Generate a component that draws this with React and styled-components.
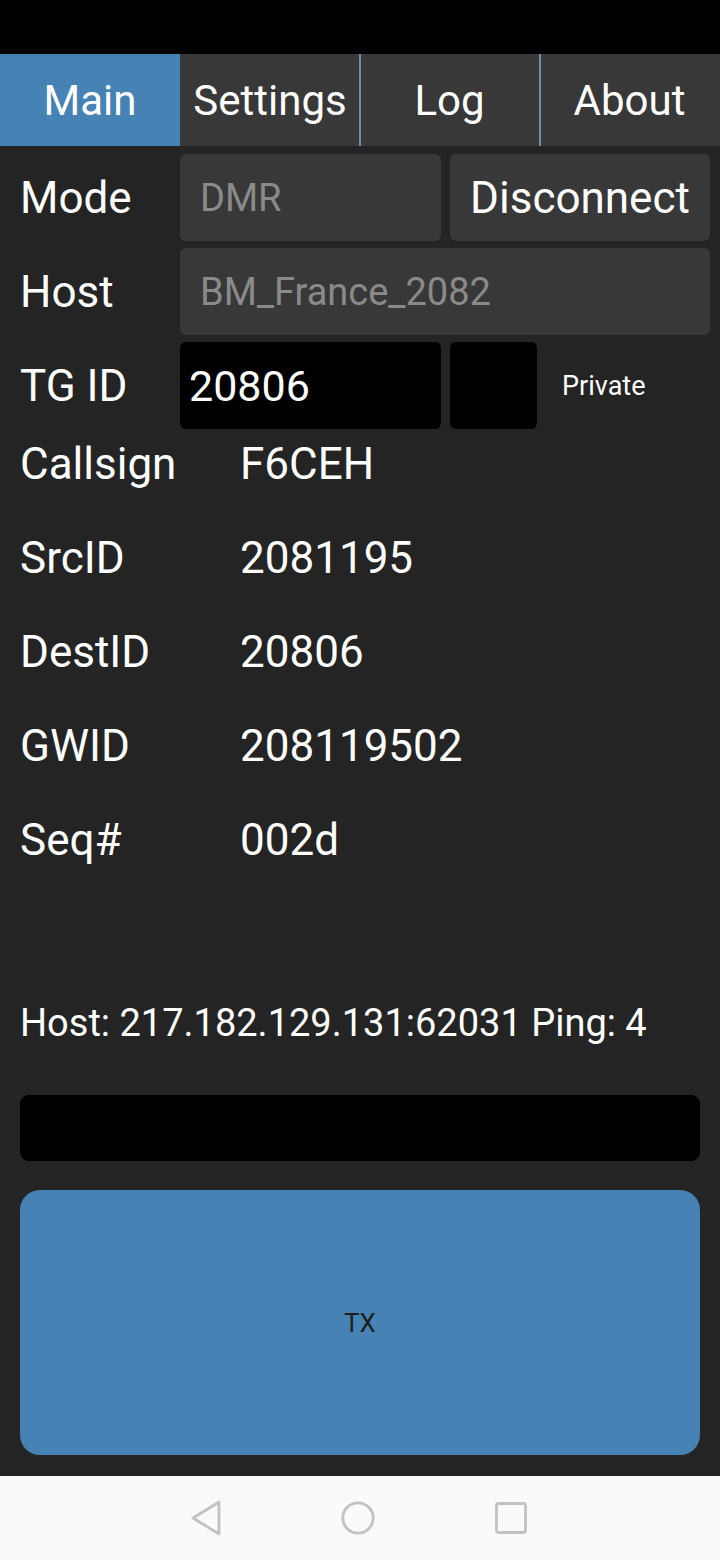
import React, {useState} from "react";
import styled, {createGlobalStyle} from "styled-components";

const GlobalStyle = createGlobalStyle`
  html, body {
    margin: 0;
    padding: 0;
    background: #242424;
  }
  * {
    box-sizing: border-box;
  }
  body {
    font-family: Roboto, "Noto Sans", "Liberation Sans", sans-serif;
    color: #ffffff;
  }
`;

const TABS = ["Main", "Settings", "Log", "About"];

const INFO = [
  {label: "Callsign", value: "F6CEH"},
  {label: "SrcID", value: "2081195"},
  {label: "DestID", value: "20806"},
  {label: "GWID", value: "208119502"},
  {label: "Seq#", value: "002d"},
];

const App = () => {
  const [tab, setTab] = useState("Main");

  return (
    <>
      <GlobalStyle />
      <Screen>
        <StatusBar />
        <TabBar>
          {TABS.map((t, i) => (
            <Tab key={t} $active={t === tab} $divider={i > 1} onClick={() => setTab(t)}>
              {t}
            </Tab>
          ))}
        </TabBar>

        <Content>
          <Form>
            <Label>Mode</Label>
            <Field>DMR</Field>
            <FlatButton>Disconnect</FlatButton>

            <Label>Host</Label>
            <Field $wide>BM_France_2082</Field>

            <Label>TG ID</Label>
            <Field $dark>20806</Field>
            <TgExtra>
              <CheckBox />
              <SmallText>Private</SmallText>
            </TgExtra>
          </Form>

          <InfoList>
            {INFO.map((row) => (
              <React.Fragment key={row.label}>
                <InfoLabel>{row.label}</InfoLabel>
                <Value>{row.value}</Value>
              </React.Fragment>
            ))}
          </InfoList>

          <HostLine>Host: 217.182.129.131:62031 Ping: 4</HostLine>

          <LevelBar />
          <TxButton>TX</TxButton>
        </Content>

        <NavBar>
          <svg width="34" height="38" viewBox="0 0 34 38">
            <path d="M30 3 L30 35 L4 19 Z" fill="none" stroke="#c2c2c2" strokeWidth="2.8" strokeLinejoin="round" />
          </svg>
          <svg width="38" height="38" viewBox="0 0 38 38">
            <circle cx="19" cy="19" r="15.2" fill="none" stroke="#c2c2c2" strokeWidth="2.8" />
          </svg>
          <svg width="36" height="36" viewBox="0 0 36 36">
            <rect x="3.5" y="3.5" width="29" height="29" rx="2" fill="none" stroke="#c2c2c2" strokeWidth="2.8" />
          </svg>
        </NavBar>
      </Screen>
    </>
  );
};

const Screen = styled.div`
  width: 720px;
  height: 1560px;
  display: flex;
  flex-direction: column;
  background: #242424;
  overflow: hidden;
`;

const StatusBar = styled.div`
  height: 54px;
  flex: none;
  background: #000000;
`;

const TabBar = styled.div`
  height: 92px;
  flex: none;
  display: grid;
  grid-template-columns: repeat(4, 1fr);
  background: #383838;
`;

const Tab = styled.div`
  display: flex;
  align-items: center;
  justify-content: center;
  font-size: 42px;
  color: #ffffff;
  background: ${(p) => (p.$active ? "#4682b4" : "#383838")};
  box-shadow: ${(p) => (p.$divider ? "inset 2px 0 0 #6b8fb5" : "none")};
  margin-left: ${(p) => (p.$divider ? "-1px" : "0")};
  cursor: pointer;
`;

const Content = styled.div`
  flex: 1;
  display: flex;
  flex-direction: column;
`;

const Form = styled.div`
  display: grid;
  grid-template-columns: 171px 261px 260px;
  grid-auto-rows: 87px;
  column-gap: 9px;
  row-gap: 7px;
  padding-top: 8px;
`;

const Label = styled.div`
  display: flex;
  align-items: center;
  padding-left: 20px;
  font-size: 44px;
  color: #ffffff;
`;

const Field = styled.div`
  grid-column: ${(p) => (p.$wide ? "2 / 4" : "auto")};
  display: flex;
  align-items: center;
  padding-left: ${(p) => (p.$dark ? "9px" : "20px")};
  border-radius: 6px;
  background: ${(p) => (p.$dark ? "#000000" : "#383838")};
  color: ${(p) => (p.$dark ? "#ffffff" : "#8a8a8a")};
  font-size: ${(p) => (p.$dark ? "43px" : "38px")};
`;

const FlatButton = styled.div`
  display: flex;
  align-items: center;
  justify-content: center;
  border-radius: 6px;
  background: #383838;
  color: #ffffff;
  font-size: 44px;
`;

const TgExtra = styled.div`
  display: flex;
  align-items: center;
  gap: 25px;
`;

const CheckBox = styled.div`
  width: 87px;
  height: 87px;
  border-radius: 6px;
  background: #000000;
`;

const SmallText = styled.span`
  font-size: 27px;
  color: #ffffff;
`;

const InfoList = styled.div`
  display: grid;
  grid-template-columns: 240px 1fr;
  grid-auto-rows: 52px;
  row-gap: 42px;
  margin-top: 9px;
`;

const InfoLabel = styled.div`
  padding-left: 20px;
  font-size: 44px;
  line-height: 52px;
  color: #ffffff;
`;

const Value = styled.div`
  font-size: 44px;
  line-height: 52px;
  color: #ffffff;
`;

const HostLine = styled.div`
  margin-top: 135px;
  padding-left: 20px;
  font-size: 38px;
  line-height: 44px;
  color: #ffffff;
`;

const LevelBar = styled.div`
  margin: 50px 20px 0;
  height: 66px;
  border-radius: 9px;
  background: #000000;
`;

const TxButton = styled.div`
  margin: 29px 20px 0;
  height: 265px;
  border-radius: 20px;
  background: #4682b4;
  display: flex;
  align-items: center;
  justify-content: center;
  font-size: 26px;
  color: #1e1e1e;
`;

const NavBar = styled.div`
  height: 84px;
  flex: none;
  background: #fafafa;
  display: flex;
  align-items: center;
  justify-content: center;
  gap: 116px;
  padding-right: 2px;
`;

export default App;
